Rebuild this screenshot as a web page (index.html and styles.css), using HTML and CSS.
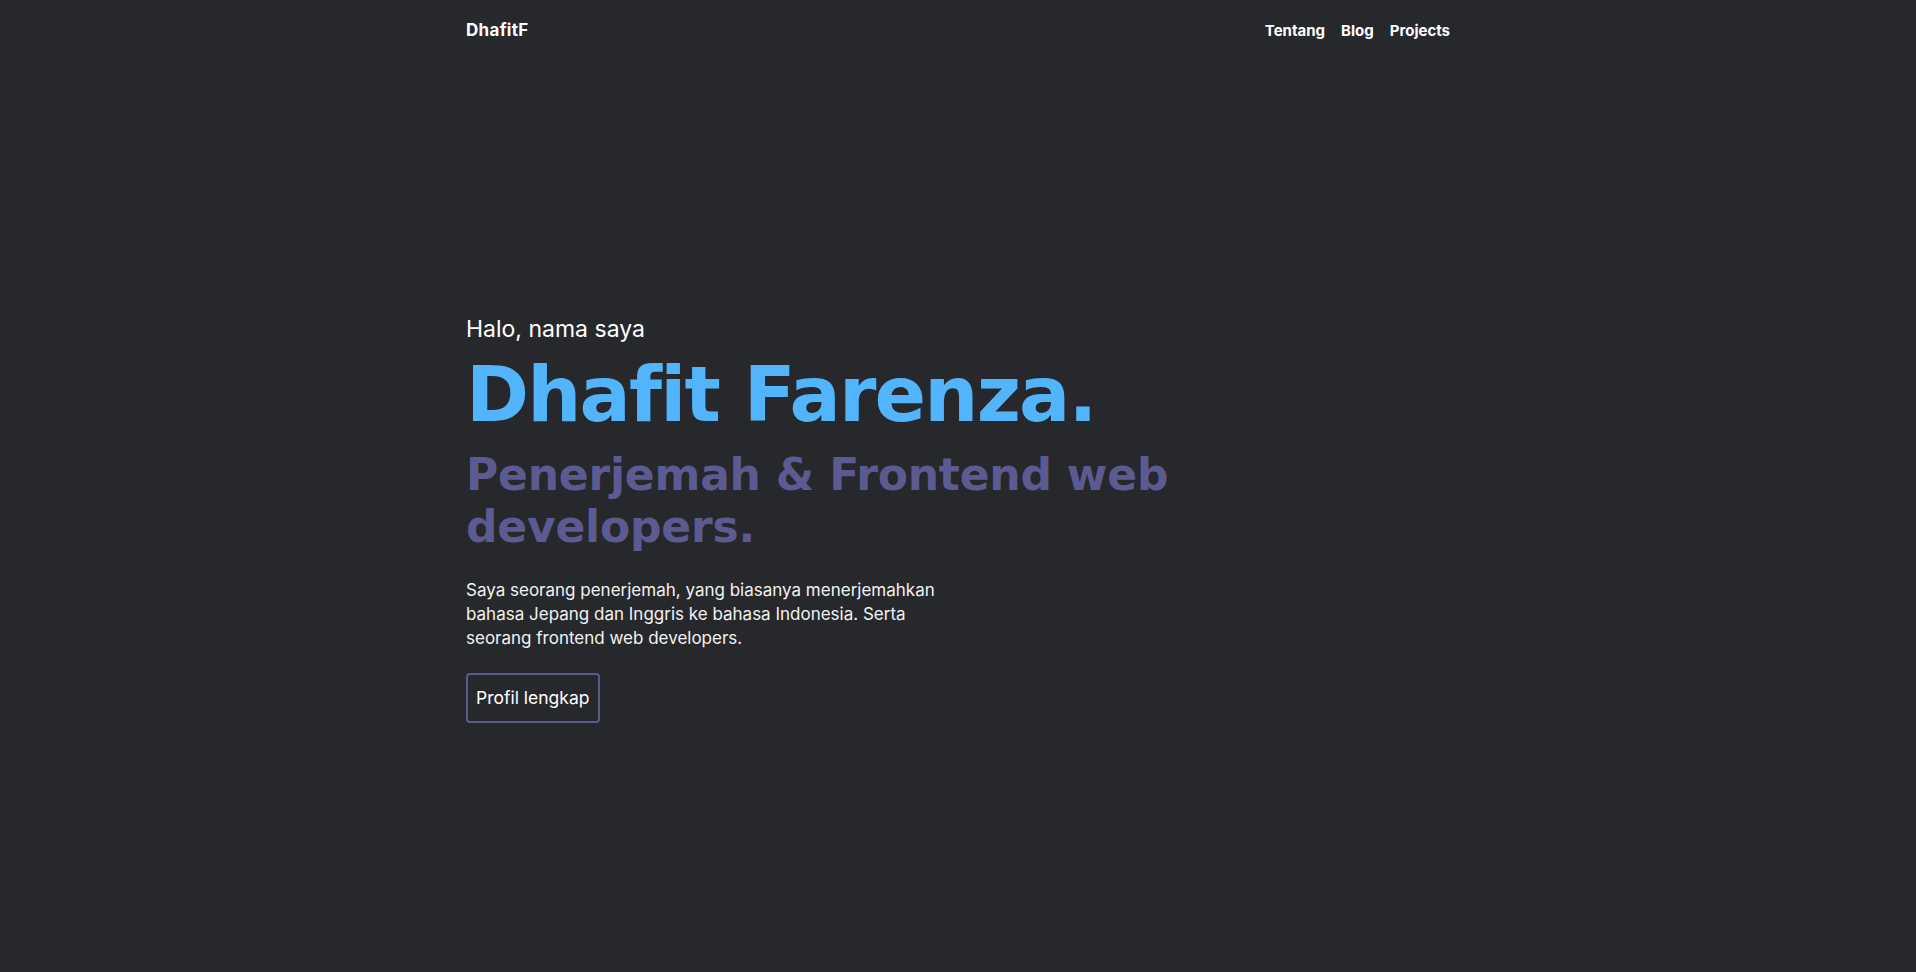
FILE: index.html
```html
<!DOCTYPE html>
<html lang="id">
<head>
<meta charset="utf-8">
<title>Dhafit Farenza</title>
<link rel="stylesheet" href="styles.css">
</head>
<body>
<div class="page">
  <header class="header">
    <a class="logo" href="#">DhafitF</a>
    <nav class="nav">
      <a href="#">Tentang</a>
      <a href="#">Blog</a>
      <a href="#">Projects</a>
    </nav>
  </header>
  <main class="hero">
    <p class="greet">Halo, nama saya</p>
    <h1 class="name">Dhafit Farenza.</h1>
    <h2 class="role">Penerjemah &amp; Frontend web developers.</h2>
    <p class="desc">Saya seorang penerjemah, yang biasanya menerjemahkan bahasa Jepang dan Inggris ke bahasa Indonesia. Serta seorang frontend web developers.</p>
    <a class="btn" href="#">Profil lengkap</a>
  </main>
</div>
</body>
</html>
```

FILE: styles.css
```css
* { box-sizing: border-box; }
html, body {
  margin: 0;
  padding: 0;
  background: #27282c;
  color: #ffffff;
  font-family: "Inter", "Liberation Sans", sans-serif;
}
a { color: inherit; text-decoration: none; }
.page {
  max-width: 1024px;
  margin: 0 auto;
  padding: 0 20px;
  min-height: 100vh;
}
.header {
  display: flex;
  justify-content: space-between;
  align-items: center;
  height: 60px;
}
.logo {
  font-weight: 700;
  font-size: 17px;
  letter-spacing: 0.3px;
}
.nav {
  display: flex;
  gap: 16px;
  font-size: 15px;
  font-weight: 700;
  padding-right: 0;
}
.hero {
  padding-top: 255px;
  display: flex;
  flex-direction: column;
  align-items: flex-start;
}
.greet {
  margin: 0;
  font-size: 23px;
  font-weight: 400;
  line-height: 28px;
}
.name {
  margin: 7px 0 0;
  color: #52b5fc;
  font-family: "DejaVu Sans", "Inter", sans-serif;
  font-size: 76px;
  font-weight: 700;
  letter-spacing: -1.8px;
  line-height: 90px;
}
.role {
  margin: 9px 0 0;
  color: #5b5b91;
  font-family: "DejaVu Sans", "Inter", sans-serif;
  font-size: 44px;
  font-weight: 700;
  letter-spacing: -0.2px;
  line-height: 52px;
  max-width: 760px;
}
.desc {
  margin: 25px 0 0;
  font-size: 17px;
  line-height: 24px;
  max-width: 490px;
  color: #f2f2f2;
}
.btn {
  margin-top: 23px;
  display: inline-block;
  border: 2px solid #5a5a8e;
  border-radius: 4px;
  padding: 12px 8px;
  font-size: 17.5px;
  line-height: 22px;
}
```
